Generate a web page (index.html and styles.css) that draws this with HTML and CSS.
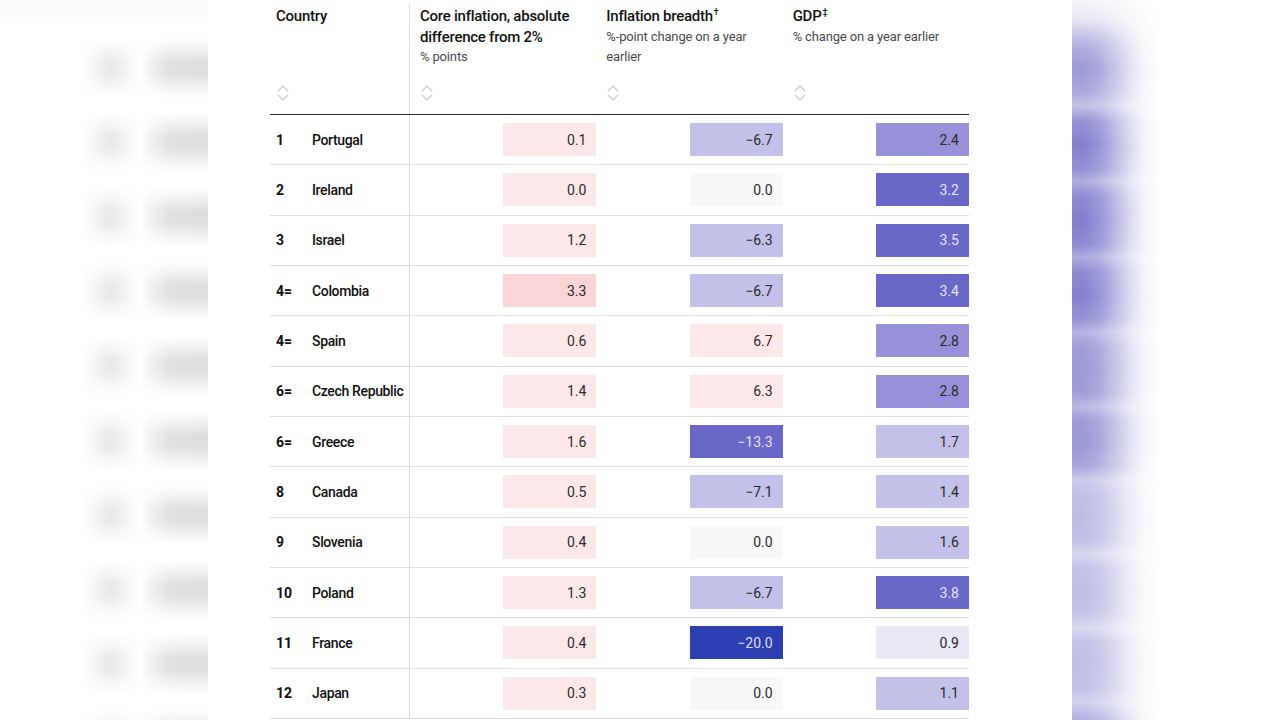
FILE: index.html
```html
<!DOCTYPE html>
<html lang="en">
<head>
<meta charset="utf-8">
<title>Inflation ranking</title>
<link rel="stylesheet" href="styles.css">
</head>
<body>
<div class="stage">
  <div class="backdrop" aria-hidden="true">
    <div class="bg-left">
      <div class="bg-row"><i class="b-rank"></i><i class="b-name"></i></div>
      <div class="bg-row"><i class="b-rank"></i><i class="b-name"></i></div>
      <div class="bg-row"><i class="b-rank"></i><i class="b-name"></i></div>
      <div class="bg-row"><i class="b-rank"></i><i class="b-name"></i></div>
      <div class="bg-row"><i class="b-rank"></i><i class="b-name"></i></div>
      <div class="bg-row"><i class="b-rank"></i><i class="b-name"></i></div>
      <div class="bg-row"><i class="b-rank"></i><i class="b-name"></i></div>
      <div class="bg-row"><i class="b-rank"></i><i class="b-name"></i></div>
      <div class="bg-row"><i class="b-rank"></i><i class="b-name"></i></div>
      <div class="bg-row"><i class="b-rank"></i><i class="b-name"></i></div>
    </div>
    <div class="bg-right">
      <div class="gdp-strip"></div>
    </div>
  </div>

  <main class="card">
    <div class="tbl">
      <div class="head">
        <div class="hcell first">
          <div class="htitle">Country</div>
          <svg class="sort" viewBox="0 0 12 16" width="12" height="16"><path d="M1 6 L6 1 L11 6 M1 10 L6 15 L11 10" fill="none" stroke="#c8c8c8" stroke-width="1.2"/></svg>
        </div>
        <div class="hcell col">
          <div class="htitle">Core inflation, absolute difference from 2%</div>
          <div class="hsub">% points</div>
          <svg class="sort" viewBox="0 0 12 16" width="12" height="16"><path d="M1 6 L6 1 L11 6 M1 10 L6 15 L11 10" fill="none" stroke="#c8c8c8" stroke-width="1.2"/></svg>
        </div>
        <div class="hcell col">
          <div class="htitle">Inflation breadth<sup>†</sup></div>
          <div class="hsub">%-point change on a year earlier</div>
          <svg class="sort" viewBox="0 0 12 16" width="12" height="16"><path d="M1 6 L6 1 L11 6 M1 10 L6 15 L11 10" fill="none" stroke="#c8c8c8" stroke-width="1.2"/></svg>
        </div>
        <div class="hcell col">
          <div class="htitle">GDP<sup>‡</sup></div>
          <div class="hsub">% change on a year earlier</div>
          <svg class="sort" viewBox="0 0 12 16" width="12" height="16"><path d="M1 6 L6 1 L11 6 M1 10 L6 15 L11 10" fill="none" stroke="#c8c8c8" stroke-width="1.2"/></svg>
        </div>
      </div>

      <div class="row"><div class="first cell"><span class="rank">1</span><span class="name">Portugal</span></div>
        <div class="col cell"><span class="val c-pink">0.1</span></div><div class="col cell"><span class="val c-lav">−6.7</span></div><div class="col cell"><span class="val c-mid">2.4</span></div></div>
      <div class="row"><div class="first cell"><span class="rank">2</span><span class="name">Ireland</span></div>
        <div class="col cell"><span class="val c-pink">0.0</span></div><div class="col cell"><span class="val c-grey">0.0</span></div><div class="col cell"><span class="val c-dark">3.2</span></div></div>
      <div class="row"><div class="first cell"><span class="rank">3</span><span class="name">Israel</span></div>
        <div class="col cell"><span class="val c-pink">1.2</span></div><div class="col cell"><span class="val c-lav">−6.3</span></div><div class="col cell"><span class="val c-dark">3.5</span></div></div>
      <div class="row"><div class="first cell"><span class="rank">4=</span><span class="name">Colombia</span></div>
        <div class="col cell"><span class="val c-pink2">3.3</span></div><div class="col cell"><span class="val c-lav">−6.7</span></div><div class="col cell"><span class="val c-dark">3.4</span></div></div>
      <div class="row"><div class="first cell"><span class="rank">4=</span><span class="name">Spain</span></div>
        <div class="col cell"><span class="val c-pink">0.6</span></div><div class="col cell"><span class="val c-pink">6.7</span></div><div class="col cell"><span class="val c-mid">2.8</span></div></div>
      <div class="row"><div class="first cell"><span class="rank">6=</span><span class="name">Czech Republic</span></div>
        <div class="col cell"><span class="val c-pink">1.4</span></div><div class="col cell"><span class="val c-pink">6.3</span></div><div class="col cell"><span class="val c-mid">2.8</span></div></div>
      <div class="row"><div class="first cell"><span class="rank">6=</span><span class="name">Greece</span></div>
        <div class="col cell"><span class="val c-pink">1.6</span></div><div class="col cell"><span class="val c-dark">−13.3</span></div><div class="col cell"><span class="val c-lav">1.7</span></div></div>
      <div class="row"><div class="first cell"><span class="rank">8</span><span class="name">Canada</span></div>
        <div class="col cell"><span class="val c-pink">0.5</span></div><div class="col cell"><span class="val c-lav">−7.1</span></div><div class="col cell"><span class="val c-lav">1.4</span></div></div>
      <div class="row"><div class="first cell"><span class="rank">9</span><span class="name">Slovenia</span></div>
        <div class="col cell"><span class="val c-pink">0.4</span></div><div class="col cell"><span class="val c-grey">0.0</span></div><div class="col cell"><span class="val c-lav">1.6</span></div></div>
      <div class="row"><div class="first cell"><span class="rank">10</span><span class="name">Poland</span></div>
        <div class="col cell"><span class="val c-pink">1.3</span></div><div class="col cell"><span class="val c-lav">−6.7</span></div><div class="col cell"><span class="val c-dark">3.8</span></div></div>
      <div class="row"><div class="first cell"><span class="rank">11</span><span class="name">France</span></div>
        <div class="col cell"><span class="val c-pink">0.4</span></div><div class="col cell"><span class="val c-navy">−20.0</span></div><div class="col cell"><span class="val c-pale">0.9</span></div></div>
      <div class="row"><div class="first cell"><span class="rank">12</span><span class="name">Japan</span></div>
        <div class="col cell"><span class="val c-pink">0.3</span></div><div class="col cell"><span class="val c-grey">0.0</span></div><div class="col cell"><span class="val c-lav">1.1</span></div></div>
    </div>
  </main>
</div>
</body>
</html>
```

FILE: styles.css
```css
* { box-sizing: border-box; }

html, body {
  margin: 0;
  padding: 0;
  background: #ffffff;
  overflow: hidden;
}

body {
  font-family: Roboto, "Liberation Sans", sans-serif;
  color: #1a1a1a;
}

.stage {
  position: relative;
  width: 1280px;
  height: 720px;
  overflow: hidden;
}

/* soft, out-of-focus enlargement of the table behind the card */
.backdrop {
  position: absolute;
  inset: 0;
  z-index: 0;
  display: flex;
  justify-content: space-between;
}

.bg-left {
  width: 340px;
  height: 720px;
  padding-top: 30.7px;
  display: flex;
  flex-direction: column;
  background: linear-gradient(to bottom, rgba(0,0,0,0.025), rgba(0,0,0,0) 22px);
}

.bg-row {
  flex: none;
  height: 74.53px;
  display: flex;
  align-items: center;
}

.b-rank,
.b-name {
  display: block;
  flex: none;
  height: 60px;
  -webkit-mask-image: linear-gradient(to bottom, transparent 0, rgba(0,0,0,0.5) 22%, #000 40%, #000 60%, rgba(0,0,0,0.5) 78%, transparent 100%);
  mask-image: linear-gradient(to bottom, transparent 0, rgba(0,0,0,0.5) 22%, #000 40%, #000 60%, rgba(0,0,0,0.5) 78%, transparent 100%);
}

.b-rank {
  margin-left: 82px;
  width: 58px;
  background: linear-gradient(to right, rgba(0,0,0,0) 0, rgba(0,0,0,0.04) 22%, rgba(0,0,0,0.085) 45%, rgba(0,0,0,0.085) 55%, rgba(0,0,0,0.04) 78%, rgba(0,0,0,0) 100%);
}

.b-name {
  margin-left: 0;
  width: 200px;
  background: linear-gradient(to right, rgba(0,0,0,0) 0, rgba(0,0,0,0.05) 10px, rgba(0,0,0,0.12) 30px, rgba(0,0,0,0.13) 60px, rgba(0,0,0,0.13) 100%);
}

.bg-right {
  width: 208px;
  height: 720px;
}

.gdp-strip {
  width: 100px;
  height: 720px;
  background: linear-gradient(to bottom,
    #f6f6fa 0px, #e6e5f4 20px, #b3b1e0 45px, #9c9ad7 68px, #aba9de 92px,
    #c2c1e7 106px, #9391d4 122px, #8482d0 145px, #9391d4 170px,
    #b0afe0 181px, #8d8bd2 196px, #8280cf 220px, #8d8bd2 245px,
    #adacdf 257px, #8d8bd2 272px, #8482d0 295px, #9290d3 318px,
    #b5b4e2 332px, #9f9dd8 348px, #9c9ad7 370px, #9f9dd8 392px,
    #bbb9e4 407px, #9f9dd8 420px, #9a98d6 442px, #a7a5db 465px,
    #cccaeb 480px, #c1bfe6 496px, #bebce5 517px, #c1bfe6 540px,
    #d8d7f0 554px, #c4c2e7 568px, #c0bee6 590px, #c4c2e7 612px,
    #dad9f1 628px, #c4c2e7 642px, #c1bfe6 663px, #c3c1e7 688px,
    #d3d1ed 702px, #b0aee0 720px);
  -webkit-mask-image: linear-gradient(to right, #000 0px, #000 12px, rgba(0,0,0,0.85) 28px, rgba(0,0,0,0.6) 42px, rgba(0,0,0,0.3) 58px, rgba(0,0,0,0.1) 72px, transparent 88px);
  mask-image: linear-gradient(to right, #000 0px, #000 12px, rgba(0,0,0,0.85) 28px, rgba(0,0,0,0.6) 42px, rgba(0,0,0,0.3) 58px, rgba(0,0,0,0.1) 72px, transparent 88px);
}

/* the main card */
.card {
  position: relative;
  z-index: 1;
  width: 864px;
  height: 720px;
  margin-left: 208px;
  background: #ffffff;
}

.tbl {
  margin-left: 62px;
  width: 699px;
}

.head {
  display: flex;
  height: 115px;
  border-bottom: 1.5px solid #2a2a2a;
}

.hcell {
  display: flex;
  flex-direction: column;
  padding: 6px 10px 13px;
}

.first {
  width: 140px;
  flex: none;
  border-right: 1px solid #dcdcdc;
}

.head .first {
  padding-left: 6px;
  margin-top: 4px;
  padding-top: 2px;
}

.col {
  flex: 1 1 0;
}

.htitle {
  font-size: 15px;
  line-height: 20.5px;
  font-weight: 500;
  letter-spacing: -0.25px;
  color: #121212;
}

.htitle sup {
  font-size: 9px;
  line-height: 0;
  vertical-align: 6px;
  margin-left: 1px;
}

.hsub {
  font-size: 13px;
  line-height: 20.5px;
  color: #4a4a4a;
  letter-spacing: -0.15px;
}

.sort {
  margin-top: auto;
  display: block;
  margin-left: 1px;
}

.row {
  display: flex;
  height: 50.33px;
  border-bottom: 1px solid #e0e0e0;
}

.cell {
  display: flex;
  align-items: center;
}

.row .first {
  padding-left: 6px;
}

.rank {
  width: 36px;
  font-size: 14px;
  font-weight: 700;
  color: #111;
}

.name {
  font-size: 14px;
  font-weight: 500;
  letter-spacing: -0.35px;
  color: #111;
  white-space: nowrap;
}

.row .col {
  justify-content: flex-end;
}

.val {
  width: 93px;
  height: 33px;
  padding-right: 10px;
  display: flex;
  align-items: center;
  justify-content: flex-end;
  font-size: 14px;
  color: #2a2a2a;
}

.c-pink  { background: #fde8e9; }
.c-pink2 { background: #fad5d7; }
.c-grey  { background: #f8f8f8; }
.c-lav   { background: #c3c0e9; }
.c-mid   { background: #9691d9; }
.c-dark  { background: #6967c8; color: #e6e6f7; }
.c-navy  { background: #2b3eb2; color: #dcdff3; }
.c-pale  { background: #e9e9f6; }
```
